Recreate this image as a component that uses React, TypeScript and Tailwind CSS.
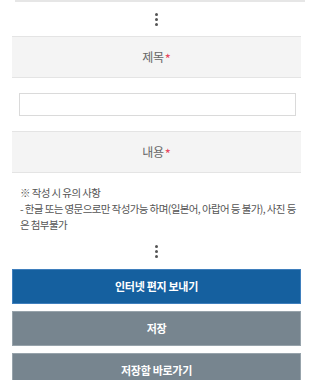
import React from "react";

function Dots() {
  return (
    <div className="flex flex-col items-center gap-[2px]">
      <span className="block w-[3px] h-[3px] rounded-full bg-[#555]" />
      <span className="block w-[3px] h-[3px] rounded-full bg-[#555]" />
      <span className="block w-[3px] h-[3px] rounded-full bg-[#555]" />
    </div>
  );
}

function Header({ label }: { label: string }) {
  return (
    <div className="mx-[12px] h-[42px] border-t border-b border-[#e4e4e4] bg-[#f4f4f4] flex items-center justify-center">
      <span className="text-[12px] text-[#666] leading-none tracking-[-0.3px] flex items-center">
        {label}
        <span className="text-[#e8475f] text-[13px] leading-none ml-[1px] mt-[3px]">*</span>
      </span>
    </div>
  );
}

export default function App() {
  return (
    <div
      className="w-[313px] h-[380px] overflow-hidden bg-white"
      style={{ fontFamily: '"Noto Sans CJK KR", "Noto Sans", sans-serif' }}
    >
      <div className="ml-[15px] w-[290px] h-[2px] bg-[#e6e6e6]" />
      <div className="h-[34px] flex items-center justify-center">
        <Dots />
      </div>
      <Header label="제목" />
      <div className="h-[53px] pl-[19px] pr-[17px] flex items-center">
        <div className="w-full h-[23px] border border-[#dadada] bg-white" />
      </div>
      <Header label="내용" />
      <div className="h-[60px] pl-[20px] pr-[16px] pt-[12px] text-[10.5px] leading-[16px] tracking-[-0.6px] text-[#555] break-all">
        <p>※ 작성 시 유의 사항</p>
        <p>- 한글 또는 영문으로만 작성가능 하며(일본어, 아랍어 등 불가), 사진 등은 첨부불가</p>
      </div>
      <div className="h-[36px] flex items-center justify-center">
        <Dots />
      </div>
      <div className="mx-[12px] flex flex-col gap-[7px]">
        <button className="h-[35px] w-full bg-[#15609f] border border-[#3f7fbd] text-white text-[11px] font-semibold tracking-[-0.3px]">
          인터넷 편지 보내기
        </button>
        <button className="h-[35px] w-full bg-[#77858f] border border-[#97a3ab] text-white text-[11px] font-semibold tracking-[-0.3px]">
          저장
        </button>
        <button className="h-[35px] w-full bg-[#77858f] border border-[#97a3ab] text-white text-[11px] font-semibold tracking-[-0.3px]">
          저장함 바로가기
        </button>
      </div>
    </div>
  );
}
